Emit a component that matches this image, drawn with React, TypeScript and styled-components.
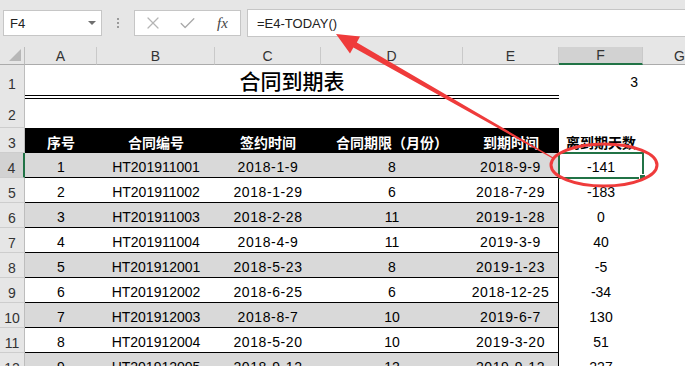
import styled, { createGlobalStyle } from "styled-components";
import { X, Check } from "lucide-react";

const GRID = "25px 72px 118px 106px 142px 96px 84px 74px";
const GREEN = "#217346";

const rows = [
	["1", "HT201911001", "2018-1-9", "8", "2018-9-9", "-141"],
	["2", "HT201911002", "2018-1-29", "6", "2018-7-29", "-183"],
	["3", "HT201911003", "2018-2-28", "11", "2019-1-28", "0"],
	["4", "HT201911004", "2018-4-9", "11", "2019-3-9", "40"],
	["5", "HT201912001", "2018-5-23", "8", "2019-1-23", "-5"],
	["6", "HT201912002", "2018-6-25", "6", "2018-12-25", "-34"],
	["7", "HT201912003", "2018-8-7", "10", "2019-6-7", "130"],
	["8", "HT201912004", "2018-5-20", "10", "2019-3-20", "51"],
	["9", "HT201912005", "2018-9-12", "12", "2019-9-12", "227"],
];

const headers = ["序号", "合同编号", "签约时间", "合同期限（月份）", "到期时间"];
const letters = ["A", "B", "C", "D", "E", "F", "G"];

export default function App() {
	return (
		<Page>
			<GlobalStyle />
			<FormulaBar>
				<NameBox>
					F4
					<Caret />
				</NameBox>
				<Grip>
					<i />
					<i />
					<i />
				</Grip>
				<ButtonBox>
					<X size={20} strokeWidth={1.5} color="#b5b5b5" />
					<Check size={19} strokeWidth={1.6} color="#a8a8a8" />
					<Fx>fx</Fx>
				</ButtonBox>
				<FormulaInput>=E4-TODAY()</FormulaInput>
			</FormulaBar>

			<Sheet>
				<Row $h={18}>
					<Corner>
						<svg width="12" height="12" viewBox="0 0 12 12">
							<polygon points="12,0 12,12 0,12" fill="#b7b7b7" />
						</svg>
					</Corner>
					{letters.map((l) => (
						<ColHead key={l} $selected={l === "F"}>
							{l}
						</ColHead>
					))}
				</Row>

				<Row $h={32}>
					<RowHead>1</RowHead>
					<Title>合同到期表</Title>
					<TopValue>3</TopValue>
				</Row>

				<Row $h={31}>
					<RowHead>2</RowHead>
				</Row>

				<Row $h={25}>
					<RowHead>3</RowHead>
					{headers.map((h) => (
						<HeadCell key={h}>{h}</HeadCell>
					))}
					<OutsideHead>离到期天数</OutsideHead>
				</Row>

				{rows.map((r, i) => (
					<Row key={r[0]} $h={25}>
						<RowHead $selected={i === 0}>{i + 4}</RowHead>
						{r.slice(0, 5).map((v, j) => (
							<DataCell
								key={j}
								$shaded={i % 2 === 0}
								$last={j === 4}
								$date={j === 2 || j === 4}
							>
								{v}
							</DataCell>
						))}
						<DaysCell $selected={i === 0}>{r[5]}</DaysCell>
					</Row>
				))}
			</Sheet>

			<Annotation width="685" height="366" viewBox="0 0 685 366">
				<polygon
					points="336,34 360,36.5 356.8,42.4 553.3,157.4 552.7,158.6 353.4,47.4 350,53.5"
					fill="#ef3b3b"
				/>
				<ellipse cx="604" cy="165" rx="53" ry="21" fill="none" stroke="#ef3b3b" strokeWidth="3" />
			</Annotation>
		</Page>
	);
}

const GlobalStyle = createGlobalStyle`
	html, body {
		margin: 0;
		padding: 0;
		background: #fff;
	}
	body {
		font-family: "Liberation Sans", "Noto Sans CJK SC", sans-serif;
		color: #000;
	}
`;

const Page = styled.div`
	position: relative;
	width: 685px;
	height: 366px;
	overflow: hidden;
	background: #fff;
`;

const FormulaBar = styled.div`
	display: flex;
	align-items: flex-start;
	height: 47px;
	padding: 9px 0 0 3px;
	box-sizing: border-box;
	background: #e6e6e6;
`;

const NameBox = styled.div`
	display: flex;
	align-items: center;
	justify-content: space-between;
	width: 99px;
	height: 26px;
	margin-top: 1px;
	padding: 0 5px 0 6px;
	box-sizing: border-box;
	background: #fff;
	border: 1px solid #c6c6c6;
	font-size: 13px;
	color: #222;
`;

const Caret = styled.span`
	width: 0;
	height: 0;
	border-left: 4px solid transparent;
	border-right: 4px solid transparent;
	border-top: 4px solid #6f6f6f;
`;

const Grip = styled.div`
	display: flex;
	flex-direction: column;
	gap: 2px;
	margin: 9px 15px 0 15px;

	i {
		display: block;
		width: 2px;
		height: 2px;
		background: #9a9a9a;
	}
`;

const ButtonBox = styled.div`
	display: grid;
	grid-template-columns: repeat(3, 1fr);
	align-items: center;
	justify-items: center;
	width: 107px;
	height: 26px;
	margin-top: 1px;
	box-sizing: border-box;
	background: #fff;
	border: 1px solid #c6c6c6;
`;

const Fx = styled.span`
	font-family: "Liberation Serif", serif;
	font-style: italic;
	font-size: 15px;
	color: #444;
`;

const FormulaInput = styled.div`
	flex: 1;
	display: flex;
	align-items: center;
	height: 28px;
	margin-left: 6px;
	padding-left: 9px;
	box-sizing: border-box;
	background: #fff;
	border: 1px solid #c6c6c6;
	border-right: none;
	font-size: 13px;
	color: #222;
`;

const Sheet = styled.div`
	display: flex;
	flex-direction: column;
	width: 717px;
`;

const Row = styled.div<{ $h: number }>`
	display: grid;
	grid-template-columns: ${GRID};
	height: ${(p) => p.$h}px;
	font-size: 14px;
`;

const Corner = styled.div`
	display: flex;
	align-items: flex-end;
	justify-content: flex-end;
	padding: 0 3px 3px 0;
	background: #e6e6e6;
	border-right: 1px solid #bdbdbd;
	border-bottom: 1px solid #ababab;
`;

const ColHead = styled.div<{ $selected?: boolean }>`
	display: flex;
	align-items: center;
	justify-content: center;
	background: ${(p) => (p.$selected ? "#d2d2d2" : "#e6e6e6")};
	border-right: 1px solid #c9c9c9;
	border-bottom: ${(p) => (p.$selected ? `2px solid ${GREEN}` : "1px solid #ababab")};
	color: #333;
	font-size: 14px;
`;

const RowHead = styled.div<{ $selected?: boolean }>`
	display: flex;
	align-items: center;
	justify-content: center;
	padding-top: 5px;
	box-sizing: border-box;
	background: ${(p) => (p.$selected ? "#d2d2d2" : "#e6e6e6")};
	border-right: ${(p) => (p.$selected ? `2px solid ${GREEN}` : "1px solid #bdbdbd")};
	border-bottom: 1px solid #cdcdcd;
	color: #333;
	font-size: 14px;
`;

const Title = styled.div`
	grid-column: 2 / 7;
	display: flex;
	align-items: center;
	justify-content: center;
	border-bottom: 4px double #000;
	font-size: 21px;
	font-weight: 500;
`;

const TopValue = styled.div`
	display: flex;
	align-items: center;
	justify-content: flex-end;
	padding-right: 5px;
`;

const HeadCell = styled.div`
	display: flex;
	align-items: center;
	justify-content: center;
	padding-top: 2px;
	background: #000;
	color: #fff;
	font-weight: 700;
	white-space: nowrap;
`;

const OutsideHead = styled(HeadCell)`
	background: transparent;
	color: #000;
`;

const DataCell = styled.div<{ $shaded: boolean; $last: boolean; $date: boolean }>`
	display: flex;
	align-items: center;
	justify-content: center;
	padding-top: 3px;
	box-sizing: border-box;
	background: ${(p) => (p.$shaded ? "#d9d9d9" : "#fff")};
	border-bottom: 1px solid #000;
	border-right: ${(p) => (p.$last ? "1px solid #000" : "none")};
	letter-spacing: ${(p) => (p.$date ? "0.6px" : "0")};
	white-space: nowrap;
`;

const DaysCell = styled.div<{ $selected: boolean }>`
	position: relative;
	display: flex;
	align-items: center;
	justify-content: center;
	padding-top: 3px;
	box-sizing: border-box;
	outline: ${(p) => (p.$selected ? `2px solid ${GREEN}` : "none")};
	outline-offset: -1px;

	&::after {
		content: "";
		display: ${(p) => (p.$selected ? "block" : "none")};
		position: absolute;
		right: -3px;
		bottom: -3px;
		width: 5px;
		height: 5px;
		background: ${GREEN};
		border: 1px solid #fff;
	}
`;

const Annotation = styled.svg`
	position: absolute;
	top: 0;
	left: 0;
	pointer-events: none;
`;
